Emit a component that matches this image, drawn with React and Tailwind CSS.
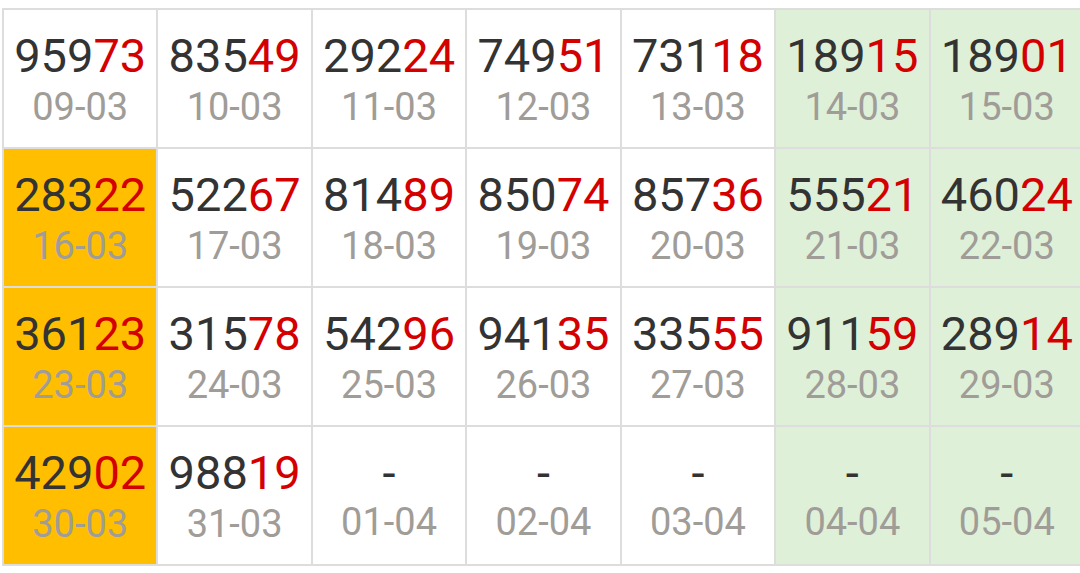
import React from 'react';

const rows = [
  [['959', '73', '09-03'], ['835', '49', '10-03'], ['292', '24', '11-03'], ['749', '51', '12-03'], ['731', '18', '13-03'], ['189', '15', '14-03'], ['189', '01', '15-03']],
  [['283', '22', '16-03', true], ['522', '67', '17-03'], ['814', '89', '18-03'], ['850', '74', '19-03'], ['857', '36', '20-03'], ['555', '21', '21-03'], ['460', '24', '22-03']],
  [['361', '23', '23-03', true], ['315', '78', '24-03'], ['542', '96', '25-03'], ['941', '35', '26-03'], ['335', '55', '27-03'], ['911', '59', '28-03'], ['289', '14', '29-03']],
  [['429', '02', '30-03', true], ['988', '19', '31-03'], [null, null, '01-04'], [null, null, '02-04'], [null, null, '03-04'], [null, null, '04-04'], [null, null, '05-04']],
];

function Cell({ head, tail, date, hot, weekend }) {
  const bg = hot ? 'bg-[#ffbf00]' : weekend ? 'bg-[#dff0d8]' : 'bg-white';
  return (
    <div className={`${bg} flex flex-col items-center pt-[22px] h-[137px]`}>
      {head ? (
        <div className="text-[47px] leading-none text-[#333333]">
          {head}
          <span className="text-[#d40000]">{tail}</span>
        </div>
      ) : (
        <div className="text-[47px] leading-none text-[#333333]">-</div>
      )}
      <div className={`text-[38px] leading-none text-[#a09c98] ${head ? 'mt-[9px]' : 'mt-[7px]'}`}>{date}</div>
    </div>
  );
}

export default function App() {
  return (
    <div className="w-[1080px] h-[573px] overflow-hidden bg-white" style={{ fontFamily: 'Roboto, "Noto Sans", sans-serif' }}>
      <div className="ml-[2px] mt-[8px] w-[1083px] grid grid-cols-7 gap-[2px] p-[2px] bg-[#dddddd]">
        {rows.map((row, r) =>
          row.map(([head, tail, date, hot], c) => (
            <Cell key={`${r}-${c}`} head={head} tail={tail} date={date} hot={hot} weekend={c >= 5} />
          ))
        )}
      </div>
    </div>
  );
}
